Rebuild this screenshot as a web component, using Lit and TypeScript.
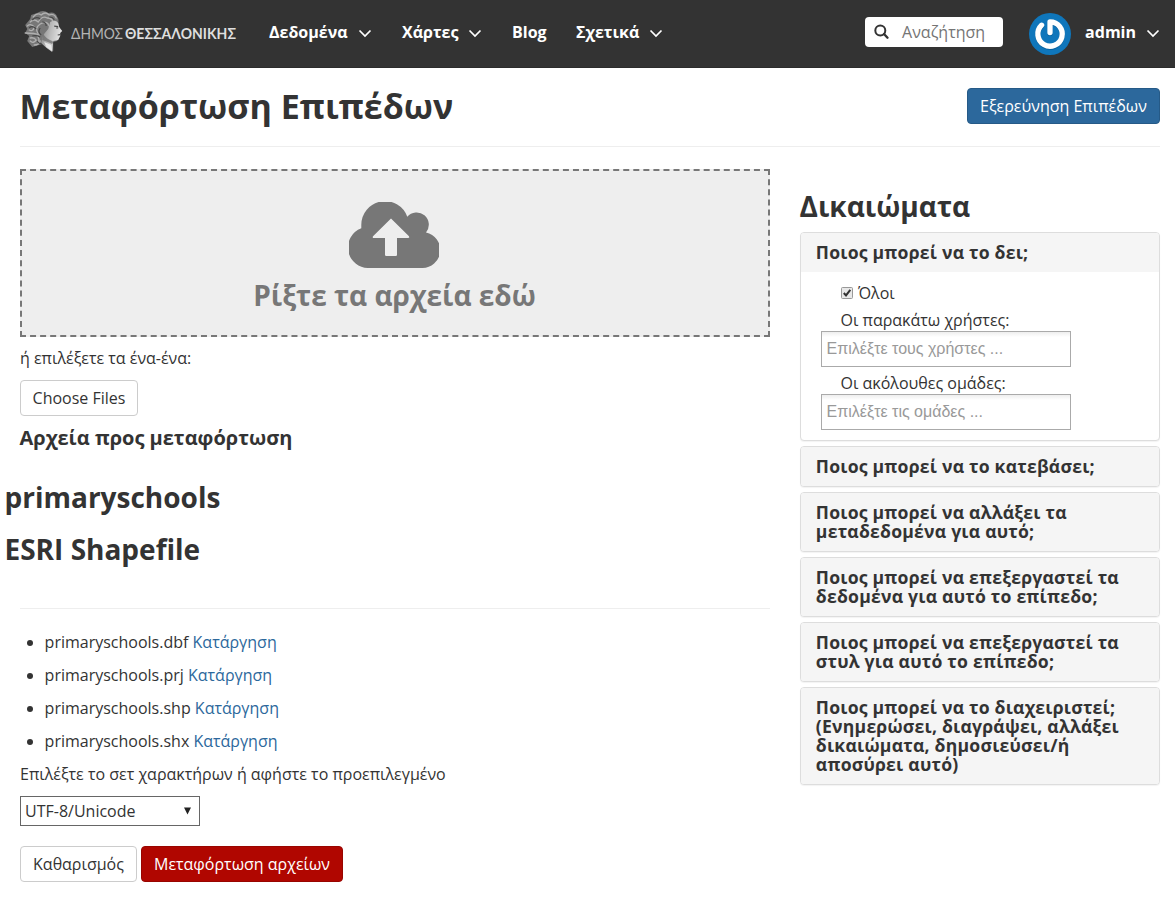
import { LitElement, html, css, svg } from "lit";
import { customElement, property } from "lit/decorators.js";

const chevron = svg`<path d="M1.500 1.500 L7 7 L12.500 1.500" fill="none" stroke="#fff" stroke-width="1.700"/>`;

@customElement("city-logo")
class CityLogo extends LitElement {
  static styles = css`
    :host { display: block; width: 216px; height: 48px; }
    svg { display: block; overflow: visible; }
    .thin { font: 400 15px Lato, sans-serif; fill: #b5b5b5; }
    .strong { font: 700 15px Lato, sans-serif; fill: #dedede; }
  `;
  render() {
    return html`<svg width="216" height="48" viewBox="0 0 216 48" role="img" aria-label="Δήμος Θεσσαλονίκης">
      <defs>
        <linearGradient id="face" x1="0" y1="0" x2="1" y2="0.300">
          <stop offset="0" stop-color="#858585"/><stop offset=".5" stop-color="#bbb"/><stop offset="1" stop-color="#e6e6e6"/>
        </linearGradient>
      </defs>
      <g transform="translate(-1.800 2)">
        <path d="M15 3 Q21 -1 26 3 Q33 1 35 7 Q37 9 36 14 L38 21 L36 25 L35 31 L31 32 L31 41 Q26 40 20 34 L10 37 L5 31 L7 26 L3 23 L5 19 L3 15 L8 9 L9 5Z" fill="#777"/>
        <g fill="none" stroke="#b0b0b0" stroke-width="1.300" stroke-linecap="round">
          <path d="M11 7 Q15 2 19 5 Q23 1 27 5 Q32 3 34 8"/>
          <path d="M8 12 Q12 8 16 12 Q20 5 25 8 Q30 8 31 12"/>
          <path d="M5 16 Q9 13 12 17 Q11 22 7 20"/>
          <path d="M16 24 Q12 18 18 14 Q25 10 27 16"/>
          <path d="M3 23 Q13 23 17 25 M8 28 Q12 27 14 30 Q11 34 8 31"/>
          <path d="M12 35 Q17 35 18 31 M15 26 Q18 29 16 32"/>
        </g>
        <g fill="none" stroke="#484848" stroke-width="1.200">
          <path d="M10 10 Q14 6 18 9 M7 18 Q10 15 14 19 M20 12 Q24 12 24 16 M10 26 Q14 25 18 27 M18 18 Q15 22 19 25 M27 7 Q31 7 32 10 M15 31 Q17 35 21 33"/>
        </g>
        <path d="M28 12 Q33 9 36 13 L37 17 L40 21 L38 23 L38 26 L36 30 L31 31 L30 42 Q24 38 19 33 L21 25 L26 19Z" fill="url(#face)"/>
        <path d="M21 24 Q24 29 30 31 L31 32 L30 34 Q24 31 20 30Z" fill="#6a6a6a" opacity=".7"/>
        <path d="M32 16.200 L36 16.600 M34 18 L36 18 M35.500 25 L38 24.600" fill="none" stroke="#4c4c4c" stroke-width="1.200"/>
        <path d="M22 32 L29 35 L30 41 L24 37Z" fill="#f0f0f0" opacity=".8"/>
      </g>
      <text class="thin" x="47" y="31" textLength="52" lengthAdjust="spacingAndGlyphs">ΔΗΜΟΣ</text>
      <text class="strong" x="101" y="31" textLength="111" lengthAdjust="spacingAndGlyphs">ΘΕΣΣΑΛΟΝΙΚΗΣ</text>
    </svg>`;
  }
}

@customElement("site-header")
class SiteHeader extends LitElement {
  static styles = css`
    :host { display: block; }
    .bar { height: 68px; box-sizing: border-box; background: #333; display: flex; align-items: center; padding: 0 15px 0 24px; color: #fff; border-bottom: 1px solid #2c2c2c;
      font: 700 16px/24px "Open Sans", sans-serif; }
    .logo { margin-bottom: 3px; width: 216px; }
    nav { display: flex; margin-left: 29px; margin-bottom: 3px; }
    .item { display: flex; align-items: center; white-space: nowrap; }
    .item svg { margin-left: 10px; margin-top: 3px; }
    .i0 { width: 133px; } .i1 { width: 110px; } .i2 { width: 64px; }
    .search { margin-left: auto; width: 138px; height: 30px; box-sizing: border-box; background: #fff; border-radius: 4px; display: flex; align-items: center; padding-left: 9px; margin-bottom: 4px;
      font-weight: 400; color: #757575; }
    .search svg { margin-top: 1px; }
    .search span { margin-left: 12px; }
    .avatar { margin-left: 26px; }
    .avatar svg { display: block; }
    .user { margin-left: 14px; margin-bottom: 3px; }
  `;
  render() {
    const items = ["Δεδομένα", "Χάρτες", "Blog", "Σχετικά"];
    const arrow = html`<svg width="14" height="9" viewBox="0 0 14 9">${chevron}</svg>`;
    return html`<header class="bar">
      <city-logo class="logo"></city-logo>
      <nav>${items.map((t, i) => html`<div class="item i${i}">${t}${t === "Blog" ? "" : arrow}</div>`)}</nav>
      <div class="search">
        <svg width="16" height="16" viewBox="0 0 16 16"><circle cx="6.300" cy="6.500" r="5" fill="none" stroke="#333" stroke-width="2"/><path d="M10 10 L13.500 13.700" stroke="#333" stroke-width="2.400" stroke-linecap="round"/></svg>
        <span>Αναζήτηση</span>
      </div>
      <div class="avatar"><svg width="42" height="42" viewBox="0 0 42 42">
        <circle cx="21" cy="21" r="21" fill="#0f76bb"/>
        <g fill="none" stroke-width="5.300" stroke-linecap="round" stroke-linejoin="round"><path stroke="#07609c" d="M21 19.500 V8.800 A12.200 12.200 0 1 1 12.600 12.200" transform="translate(0 .9)"/><path stroke="#fff" d="M21 19.500 V8.800 A12.200 12.200 0 1 1 12.600 12.200"/></g>
      </svg></div>
      <div class="item user">admin${arrow}</div>
    </header>`;
  }
}

@customElement("permission-panel")
class PermissionPanel extends LitElement {
  @property() heading = "";
  @property({ type: Boolean }) open = false;
  static styles = css`
    :host { display: block; }
    .panel { border: 1px solid #ddd; border-radius: 4px; box-shadow: 0 1px 1px rgba(0,0,0,.05); background: #fff; overflow: hidden; }
    .head { background: #f5f5f5; padding: 10px 15px; font: 700 17.600px/19px "Open Sans", sans-serif; letter-spacing: .22px; color: #333; margin-left: -.2px; }
    .body { height: 168px; box-sizing: border-box; padding: 8px 20px 0; }
  `;
  render() {
    return html`<section class="panel"><div class="head">${this.heading}</div>${this.open ? html`<div class="body"><slot></slot></div>` : ""}</section>`;
  }
}

@customElement("app-root")
class AppRoot extends LitElement {
  static styles = css`
    :host { display: block; height: 899px; overflow: hidden; background: #fff; color: #333; font: 400 16px/23px "Open Sans", sans-serif; }
    h1, h2, h3, h4, p, ul { margin: 0; font-weight: 700; }
    .title { margin: 0 15px 0 20px; height: 79px; box-sizing: border-box; padding-top: 20px; border-bottom: 1px solid #eee; display: flex; justify-content: space-between; align-items: flex-start; }
    h1 { font-size: 34px; line-height: 37px; white-space: nowrap; margin-left: -.5px; }
    .btn { display: flex; align-items: center; justify-content: center; box-sizing: border-box; height: 36px; border: 1px solid #ccc; border-radius: 4px; background: #fff; white-space: nowrap; }
    .blue { width: 193px; background: #2c689c; border-color: #265a87; color: #fff; }
    .red { width: 202px; background: #b00600; border-color: #980500; color: #fff; }
    .choose { width: 118px; margin-top: 10px; }
    .clear { width: 117px; }
    main { display: grid; grid-template-columns: 750px 360px; column-gap: 30px; margin-left: 20px; padding-top: 22px; align-items: start; }
    .drop { height: 168px; box-sizing: border-box; border: 2px dashed #777; background: #eee; color: #777; display: flex; flex-direction: column; align-items: center; padding-top: 31px; }
    .drop svg { display: block; margin-right: 2px; }
    .drop h2 { font-size: 28px; line-height: 36px; margin-top: 9px; margin-right: 1px; }
    p { font-weight: 400; }
    .pick { margin-top: 10px; }
    h4 { font-size: 20px; line-height: 24px; margin-top: 10px; margin-left: -.5px; }
    .layer { margin-left: -15.500px; margin-top: 29px; }
    .layer h3 { font-size: 28px; line-height: 36px; margin-bottom: 16px; }
    .rule { border-top: 1px solid #eee; margin-top: 41px; }
    ul { padding: 0 0 0 24.600px; margin-top: 17px; font-weight: 400; }
    li { line-height: 33px; }
    a { color: #2c689c; }
    .charset { margin-top: 5px; }
    .select { width: 180px; height: 30px; box-sizing: border-box; border: 1px solid #666; margin-top: 10px; display: flex; align-items: center; justify-content: space-between; padding: 0 7px 0 4px; }
    .actions { display: flex; gap: 4px; margin-top: 20px; }
    aside h3 { font-size: 28px; line-height: 32px; margin-top: 21px; margin-bottom: 10px; margin-left: -.5px; }
    .panels { display: flex; flex-direction: column; gap: 5px; }
    .all { display: flex; align-items: center; height: 27px; padding-left: 20px; gap: 5px; }
    .all svg { margin-bottom: 2px; }
    .lab { height: 25px; line-height: 29px; padding-left: 19.500px; }
    .lab.first { height: 24px; line-height: 27px; }
    .field { width: 250px; height: 36px; box-sizing: border-box; border: 1px solid #aaa; background: linear-gradient(#eee, #fff 15%); font: 400 16px/34px "Liberation Sans", sans-serif; color: #999; padding-left: 4.600px; margin-bottom: 2px; white-space: nowrap; }
  `;
  render() {
    const rest = [
      "Ποιος μπορεί να το κατεβάσει;",
      "Ποιος μπορεί να αλλάξει τα μεταδεδομένα για αυτό;",
      "Ποιος μπορεί να επεξεργαστεί τα δεδομένα για αυτό το επίπεδο;",
      "Ποιος μπορεί να επεξεργαστεί τα στυλ για αυτό το επίπεδο;",
      "Ποιος μπορεί να το διαχειριστεί; (Ενημερώσει, διαγράψει, αλλάξει δικαιώματα, δημοσιεύσει/ή αποσύρει αυτό)",
    ];
    return html`
      <site-header></site-header>
      <div class="title"><h1>Μεταφόρτωση Επιπέδων</h1><div class="btn blue">Εξερεύνηση Επιπέδων</div></div>
      <main>
        <div>
          <div class="drop">
            <svg width="90" height="66" viewBox="0 0 90 66"><path fill="#777" d="M20 66 A20.500 20.500 0 0 1 12.300 26.300 V23 A23.700 23.700 0 0 1 58.300 14.800 A12 12 0 0 1 77 30.400 A18 18 0 0 1 73 66Z"/><path fill="#eee" d="M42 16.600 L60 34.200 Q61 36 59.200 36 H48 V52.800 Q48 54 46.800 54 H37.200 Q36 54 36 52.800 V36 H25 Q23 36 24 34.200Z"/></svg>
            <h2>Ρίξτε τα αρχεία εδώ</h2>
          </div>
          <p class="pick">ή επιλέξετε τα ένα-ένα:</p>
          <div class="btn choose">Choose Files</div>
          <h4>Αρχεία προς μεταφόρτωση</h4>
          <div class="layer"><h3>primaryschools</h3><h3>ESRI Shapefile</h3></div>
          <div class="rule"></div>
          <ul>${["dbf", "prj", "shp", "shx"].map((e) => html`<li>primaryschools.${e} <a>Κατάργηση</a></li>`)}</ul>
          <p class="charset">Επιλέξτε το σετ χαρακτήρων ή αφήστε το προεπιλεγμένο</p>
          <div class="select"><span>UTF-8/Unicode</span><svg width="9" height="8" viewBox="0 0 9 8"><path d="M1 .5 H8 L4.500 7.500Z" fill="#222"/></svg></div>
          <div class="actions"><div class="btn clear">Καθαρισμός</div><div class="btn red">Μεταφόρτωση αρχείων</div></div>
        </div>
        <aside>
          <h3>Δικαιώματα</h3>
          <div class="panels">
            <permission-panel open heading="Ποιος μπορεί να το δει;">
              <div class="all"><svg width="12" height="12" viewBox="0 0 12 12"><rect x=".5" y=".5" width="11" height="11" rx="1" fill="#e8e8e8" stroke="#999"/><path d="M2.800 6 L5 8.400 L9.300 2.800" fill="none" stroke="#333" stroke-width="2"/></svg><span>Όλοι</span></div>
              <div class="lab first">Οι παρακάτω χρήστες:</div>
              <div class="field">Επιλέξτε τους χρήστες ...</div>
              <div class="lab">Οι ακόλουθες ομάδες:</div>
              <div class="field">Επιλέξτε τις ομάδες ...</div>
            </permission-panel>
            ${rest.map((t) => html`<permission-panel heading=${t}></permission-panel>`)}
          </div>
        </aside>
      </main>`;
  }
}
